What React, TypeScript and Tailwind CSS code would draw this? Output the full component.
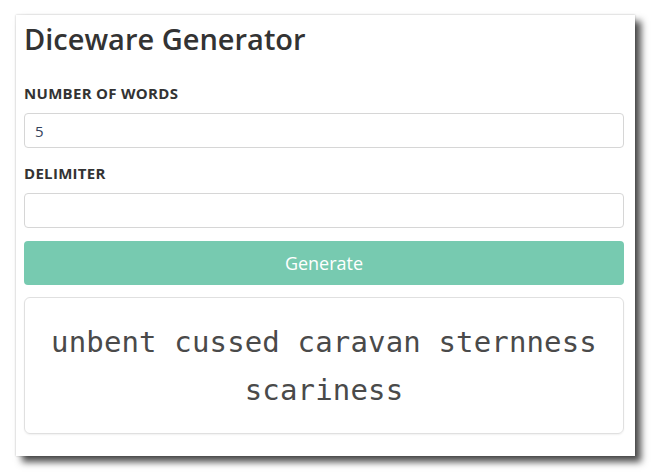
import React, { useState } from 'react';

const App: React.FC = () => {
  const [count, setCount] = useState('5');
  const [delimiter, setDelimiter] = useState('');

  return (
    <div className="min-h-screen bg-white pl-[16px] pt-[15px]" style={{ fontFamily: '"Open Sans", "Noto Sans", sans-serif' }}>
      {/* window */}
      <div className="w-[619px] h-[441px] bg-white pl-[8px] pt-[7px] shadow-[0_0_2px_rgba(0,0,0,0.25),6px_6px_7px_rgba(0,0,0,0.7)]">
        <h1 className="text-[29px] leading-[33px] font-semibold text-[#333]">Diceware Generator</h1>

        <label className="block mt-[28px] text-[15px] leading-[20px] font-bold tracking-[0.3px] text-[#333] uppercase">
          Number of words
        </label>
        <input
          value={count}
          onChange={(e) => setCount(e.target.value)}
          className="block mt-[10px] w-[600px] h-[35px] px-[10px] text-[15px] text-[#34425a] border border-[#d6d6d6] rounded-[4px] outline-none"
        />

        <label className="block mt-[15px] text-[15px] leading-[20px] font-bold tracking-[0.3px] text-[#333] uppercase">
          Delimiter
        </label>
        <input
          value={delimiter}
          onChange={(e) => setDelimiter(e.target.value)}
          className="block mt-[10px] w-[600px] h-[35px] px-[10px] text-[15px] text-[#34425a] border border-[#d6d6d6] rounded-[4px] outline-none"
        />

        <button className="block mt-[13px] w-[600px] h-[44px] bg-[#77cab0] text-white text-[18px] rounded-[4px]">
          Generate
        </button>

        {/* result */}
        <div className="mt-[12px] w-[600px] h-[137px] border border-[#e0e0e0] rounded-[6px] pt-[20px] px-[12px] text-center text-[29px] leading-[48px] tracking-[0.15px] text-[#4a4a4a] shadow-[0_1px_2px_rgba(0,0,0,0.06)]" style={{ fontFamily: '"DejaVu Sans Mono", monospace' }}>
          unbent cussed caravan sternness scariness
        </div>
      </div>
    </div>
  );
};

export default App;
